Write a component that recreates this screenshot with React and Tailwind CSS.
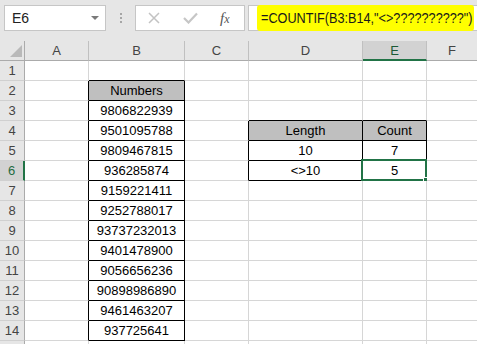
import React from 'react';

const COLS = ['A', 'B', 'C', 'D', 'E', 'F'];
const ROW_COUNT = 15;

const values = {
  B2: 'Numbers',
  B3: '9806822939',
  B4: '9501095788',
  B5: '9809467815',
  B6: '936285874',
  B7: '9159221411',
  B8: '9252788017',
  B9: '93737232013',
  B10: '9401478900',
  B11: '9056656236',
  B12: '90898986890',
  B13: '9461463207',
  B14: '937725641',
  D4: 'Length',
  E4: 'Count',
  D5: '10',
  E5: '7',
  D6: '<>10',
  E6: '5',
};

const headCells = ['B2', 'D4', 'E4'];

function rightIsBlack(c, r) {
  if ((c === 'A' || c === 'B') && r >= 2 && r <= 14) return true;
  if ((c === 'C' || c === 'D' || c === 'E') && r >= 4 && r <= 6) return true;
  return false;
}

function bottomIsBlack(c, r) {
  if (c === 'B' && r >= 1 && r <= 14) return true;
  if ((c === 'D' || c === 'E') && r >= 3 && r <= 6) return true;
  return false;
}

function Cell({ c, r }) {
  const id = `${c}${r}`;
  const value = values[id];
  const right = c === 'F' ? 'border-r-0' : rightIsBlack(c, r) ? 'border-r border-r-black' : 'border-r border-r-[#d6d6d6]';
  const bottom = bottomIsBlack(c, r) ? 'border-b-black' : 'border-b-[#d6d6d6]';
  const bg = headCells.includes(id) ? 'bg-[#bfbfbf]' : 'bg-white';

  return (
    <div className={`relative h-[20px] border-b text-center leading-[20px] text-black ${right} ${bottom} ${bg}`}>
      {value}
      {id === 'E6' && (
        <div className="absolute -left-[2px] -top-[2px] -right-[1px] -bottom-[1px] border-2 border-[#217346]">
          <div className="absolute -right-[4px] -bottom-[4px] h-[6px] w-[6px] border border-white bg-[#217346]" />
        </div>
      )}
    </div>
  );
}

function Toolbar() {
  return (
    <div className="flex h-[41px] items-start bg-[#e6e6e6] pl-[4px] pt-[5px]">
      <div className="flex h-[26px] w-[102px] items-center justify-between border border-[#c6c6c6] bg-white pl-[7px] pr-[6px]">
        <span className="text-[14px] text-[#222]">E6</span>
        <svg width="8" height="4" viewBox="0 0 8 4">
          <path d="M0 0 L8 0 L4 4 Z" fill="#7a7a7a" />
        </svg>
      </div>
      <div className="ml-[14px] mt-[8px] flex flex-col gap-[2px]">
        <span className="h-[2px] w-[2px] bg-[#a6a6a6]" />
        <span className="h-[2px] w-[2px] bg-[#a6a6a6]" />
        <span className="h-[2px] w-[2px] bg-[#a6a6a6]" />
      </div>
      <div className="ml-[13px] flex h-[26px] w-[110px] items-center border border-[#c6c6c6] bg-white">
        <svg className="ml-[12px]" width="12" height="12" viewBox="0 0 12 12">
          <path d="M1 1 L11 11 M11 1 L1 11" stroke="#c3c3c3" strokeWidth="1.5" fill="none" />
        </svg>
        <svg className="ml-[23px]" width="15" height="12" viewBox="0 0 15 12">
          <path d="M1 6 L5.5 10.5 L14 1.5" stroke="#c6c6c6" strokeWidth="2.2" fill="none" />
        </svg>
        <span className="ml-[22px] font-['Liberation_Serif',serif] text-[15px] italic leading-none text-[#555]">
          f<span className="text-[12px]">x</span>
        </span>
      </div>
      <div className="ml-[3px] flex h-[26px] flex-1 items-center border border-r-0 border-[#c6c6c6] bg-white">
        <div className="ml-[8px] flex h-[26px] w-[217px] shrink-0 items-center overflow-visible rounded-[3px] bg-[#ffff00] pl-[4px]">
          <span className="origin-left scale-x-[0.845] whitespace-nowrap text-[15px] text-[#1a1a1a]">
            =COUNTIF(B3:B14,"&lt;&gt;??????????")
          </span>
        </div>
      </div>
    </div>
  );
}

function Grid() {
  const rows = Array.from({ length: ROW_COUNT }, (_, i) => i + 1);
  return (
    <div className="grid grid-cols-[25px_64px_96px_64px_114px_64px_1fr]">
      <div className="flex h-[20px] items-end justify-end border-b border-r border-b-[#ababab] border-r-[#ababab] bg-[#e6e6e6] pb-[3px] pr-[2px]">
        <svg width="12" height="12" viewBox="0 0 12 12">
          <path d="M12 0 L12 12 L0 12 Z" fill="#b9b9b9" />
        </svg>
      </div>
      {COLS.map((c) =>
        c === 'E' ? (
          <div key={c} className="h-[20px] border-b-2 border-r border-b-[#217346] border-r-[#c0c0c0] bg-[#d2d2d2] text-center leading-[19px] text-[#1b5a36]">
            {c}
          </div>
        ) : (
          <div key={c} className={`h-[20px] border-b border-b-[#ababab] bg-[#e6e6e6] text-center leading-[20px] text-[#444] ${c === 'F' ? '' : 'border-r border-r-[#c0c0c0]'}`}>
            {c}
          </div>
        )
      )}
      {rows.map((r) => (
        <React.Fragment key={r}>
          {r === 6 ? (
            <div className="h-[20px] border-b border-r-2 border-b-[#d0d0d0] border-r-[#217346] bg-[#d2d2d2] text-center leading-[20px] text-[#1e6b41]">
              {r}
            </div>
          ) : (
            <div className="h-[20px] border-b border-r border-b-[#d0d0d0] border-r-[#ababab] bg-[#e6e6e6] text-center leading-[20px] text-[#444]">
              {r <= 14 ? r : ''}
            </div>
          )}
          {COLS.map((c) => (
            <Cell key={c} c={c} r={r} />
          ))}
        </React.Fragment>
      ))}
    </div>
  );
}

export default function App() {
  return (
    <div className="h-[344px] w-[477px] overflow-hidden bg-white font-['Liberation_Sans',Arial,sans-serif] text-[13px]">
      <Toolbar />
      <Grid />
    </div>
  );
}
